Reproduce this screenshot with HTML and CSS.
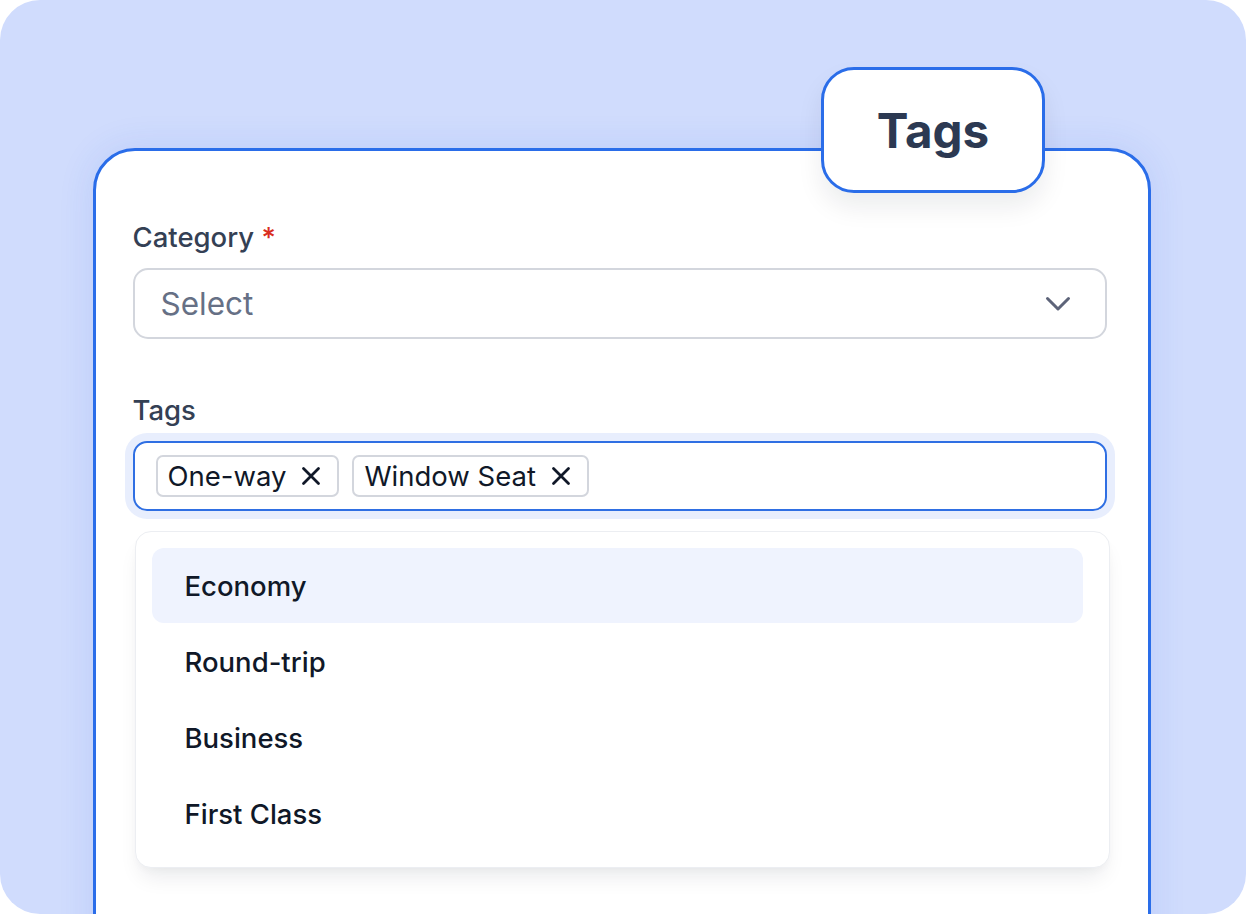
FILE: index.html
```html
<!DOCTYPE html>
<html lang="en">
<head>
<meta charset="utf-8">
<title>Tags</title>
<link rel="stylesheet" href="styles.css">
</head>
<body>
<div class="frame">
  <div class="card">
    <div class="badge">Tags</div>
    <div class="field">
      <label class="label">Category <span class="req">*</span></label>
      <div class="select">
        <span class="placeholder">Select</span>
        <svg class="chevron" width="26" height="16" viewBox="0 0 26 16"><path d="M2.5 2.5 L13 13 L23.5 2.5" fill="none" stroke="currentColor" stroke-width="3" stroke-linecap="round" stroke-linejoin="round"/></svg>
      </div>
    </div>
    <div class="field field-tags">
      <label class="label">Tags</label>
      <div class="tag-input">
        <span class="chip">One-way <svg class="x" width="20" height="20" viewBox="0 0 20 20"><path d="M2.5 2.5 L17.5 17.5 M17.5 2.5 L2.5 17.5" fill="none" stroke="currentColor" stroke-width="2.8" stroke-linecap="round"/></svg></span>
        <span class="chip">Window Seat <svg class="x" width="20" height="20" viewBox="0 0 20 20"><path d="M2.5 2.5 L17.5 17.5 M17.5 2.5 L2.5 17.5" fill="none" stroke="currentColor" stroke-width="2.8" stroke-linecap="round"/></svg></span>
      </div>
      <ul class="menu">
        <li class="item active">Economy</li>
        <li class="item">Round-trip</li>
        <li class="item">Business</li>
        <li class="item">First Class</li>
      </ul>
    </div>
  </div>
</div>
</body>
</html>
```
FILE: styles.css
```css
* { box-sizing: border-box; }
html, body { margin: 0; padding: 0; background: #ffffff; }
body { font-family: Inter, "Noto Sans", "Liberation Sans", sans-serif; }

.frame {
  width: 1246px;
  height: 914px;
  border-radius: 40px;
  background: #d0dcfd;
  overflow: hidden;
  padding: 148px 0 0 93px;
}

.card {
  position: relative;
  width: 1058px;
  height: 840px;
  background: #ffffff;
  border: 3.5px solid #2a6de9;
  border-radius: 42px;
  box-shadow: 0 0 36px rgba(40, 90, 220, 0.12);
  padding: 70px 41px 0 36.5px;
}

.badge {
  position: absolute;
  top: -84.5px;
  right: 103px;
  width: 224px;
  height: 126px;
  background: #ffffff;
  border: 3.5px solid #2a6de9;
  border-radius: 33px;
  box-shadow: 0 14px 26px rgba(16, 24, 40, 0.08);
  display: flex;
  align-items: center;
  justify-content: center;
  padding-top: 2px;
  font-size: 47.5px;
  font-weight: 700;
  color: #2c3952;
}

.field { display: flex; flex-direction: column; }
.field-tags { margin-top: 55px; }

.label {
  font-size: 27.5px;
  line-height: 32px;
  font-weight: 500;
  color: #344054;
  margin-bottom: 15px;
}
.req { color: #d92d20; }

.select {
  height: 71px;
  border: 2px solid #d3d6dd;
  border-radius: 15px;
  display: flex;
  align-items: center;
  justify-content: space-between;
  padding: 0 34px 0 26px;
}
.placeholder {
  font-size: 31.5px;
  color: #667085;
}
.chevron { color: #5d6479; }

.tag-input {
  height: 70px;
  border: 2px solid #2f6fe3;
  border-radius: 14px;
  box-shadow: 0 0 0 8px #e8eefd;
  display: flex;
  align-items: center;
  gap: 13px;
  padding: 0 21px;
}
.chip {
  height: 42px;
  border: 2px solid #d3d6dd;
  border-radius: 7px;
  display: flex;
  align-items: center;
  gap: 15px;
  padding: 0 16px 0 10px;
  font-size: 27.5px;
  color: #101828;
}
.x { color: #101828; }

.menu {
  list-style: none;
  margin: 20px -3px 0 2px;
  padding: 16px 26px 16px 16px;
  height: 337px;
  border: 1px solid #eceef2;
  border-radius: 16px;
  background: #ffffff;
  box-shadow: 0 14px 22px -6px rgba(16, 24, 40, 0.09), 0 4px 8px -2px rgba(16, 24, 40, 0.03);
}
.item {
  height: 76px;
  display: flex;
  align-items: center;
  padding-left: 33px;
  font-size: 27.5px;
  font-weight: 500;
  color: #101828;
  border-radius: 12px;
}
.item.active {
  background: #eff3fe;
  height: 75px;
  margin-bottom: 1px;
}
```
